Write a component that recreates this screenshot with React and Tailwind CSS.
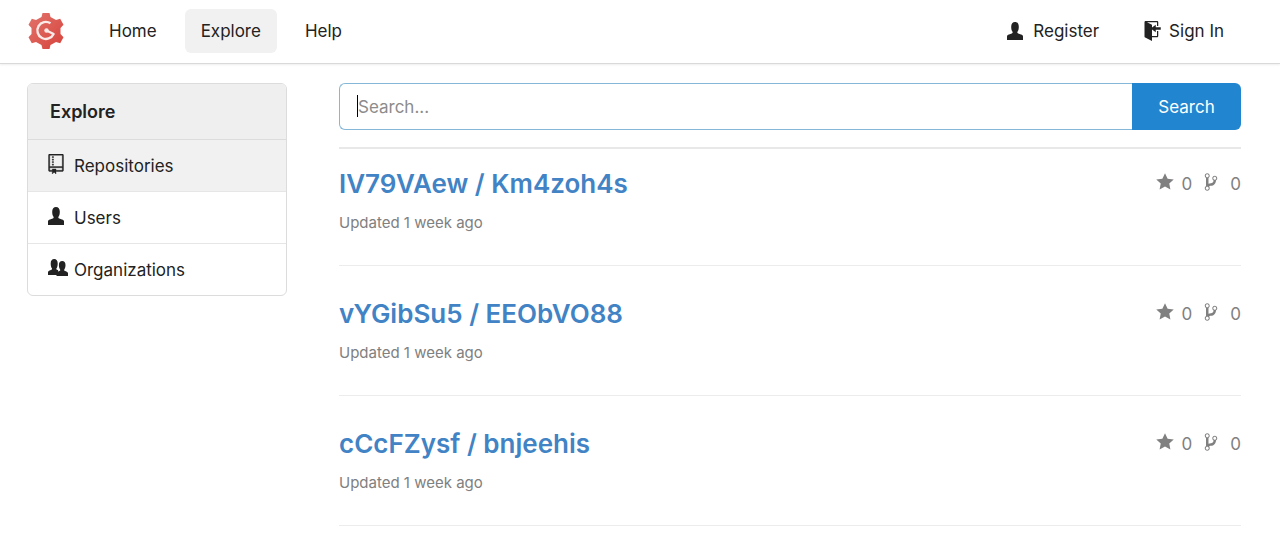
import React, { useState } from "react";

const repos = [
  { owner: "IV79VAew", name: "Km4zoh4s", stars: 0, forks: 0 },
  { owner: "vYGibSu5", name: "EEObVO88", stars: 0, forks: 0 },
  { owner: "cCcFZysf", name: "bnjeehis", stars: 0, forks: 0 },
];

const PersonIcon = ({ className }) => (
  <svg viewBox="0 0 16 18" className={className} fill="currentColor" aria-hidden="true">
    <path d="M0 18v-3.500c0-1.200.8-1.700 2-2.100l2.800-.9c.8-.3 1.100-.9.7-1.700C4.600 8.600 4.200 7 4.200 4.800 4.200 1.700 5.600 0 8 0s3.800 1.700 3.800 4.800c0 2.200-.4 3.800-1.300 5-.4.8-.1 1.400.7 1.700l2.800.9c1.200.4 2 .9 2 2.100V18z" />
  </svg>
);

const OrganizationIcon = ({ className }) => (
  <svg viewBox="0 0 20 18" className={className} fill="currentColor" aria-hidden="true">
    <path d="M0 16v-2.600c0-1.100.7-1.600 1.700-2l1.700-.6c.7-.3.8-.8.5-1.500C3.100 8.200 2.700 6.700 2.700 4.500 2.700 1.600 4 0 6.200 0s3.500 1.600 3.500 4.500c0 2.200-.4 3.700-1.200 4.800-.3.700-.2 1.200.5 1.500l1.200.4L9.500 16z" />
    <path d="M8.500 17v-2.500c0-1.200.7-1.700 1.700-2.100l1.500-.6c.6-.3.7-.8.4-1.400-.8-1.100-1.200-2.400-1.200-4.300C10.900 3.500 12.100 2 14.200 2s3.300 1.500 3.300 4.100c0 1.900-.4 3.200-1.200 4.300-.3.600-.2 1.100.4 1.400l1.500.6c1 .4 1.800.9 1.800 2.100V17z" />
  </svg>
);

const RepoIcon = ({ className }) => (
  <svg viewBox="0 0 12 16" className={className} fill="currentColor" stroke="currentColor" strokeWidth="0.300" aria-hidden="true">
    <path d="M4 9H3V8h1v1zm0-3H3v1h1V6zm0-2H3v1h1V4zm0-2H3v1h1V2zm8-1v12c0 .55-.45 1-1 1H6v2l-1.500-1.500L3 16v-2H1c-.55 0-1-.45-1-1V1c0-.55.45-1 1-1h10c.55 0 1 .45 1 1zm-1 10H1v2h2v-1h3v1h5v-2zm0-10H1v9h10V1z" />
  </svg>
);

const SignInIcon = ({ className }) => (
  <svg viewBox="0 0 14 16" className={className} fill="currentColor" aria-hidden="true">
    <path d="M7 6.750V12h4V8h1v4c0 .55-.45 1-1 1H7v3l-5.450-2.720c-.33-.17-.55-.52-.55-.91V1c0-.55.45-1 1-1h9c.55 0 1 .45 1 1v3h-1V1H3l4 2v2.250L10 3v2h4v2h-4v2L7 6.750z" />
  </svg>
);

const StarIcon = ({ className }) => (
  <svg viewBox="0 0 14 16" className={className} fill="currentColor" aria-hidden="true">
    <path d="M14 6l-4.900-.64L7 1 4.900 5.360 0 6l3.600 3.260L2.670 14 7 11.670 11.330 14l-.93-4.740L14 6z" />
  </svg>
);

const BranchIcon = ({ className }) => (
  <svg viewBox="0 0 10 16" className={className} fill="currentColor" aria-hidden="true">
    <path d="M10 5c0-1.110-.89-2-2-2a1.993 1.993 0 0 0-1 3.720v.3c-.02.52-.23.98-.63 1.380-.4.4-.86.61-1.380.63-.83.02-1.480.16-2 .45V4.720a1.993 1.993 0 0 0-1-3.720C.88 1 0 1.890 0 3a2 2 0 0 0 1 1.720v6.560c-.59.35-1 .99-1 1.720 0 1.110.89 2 2 2 1.110 0 2-.89 2-2 0-.53-.2-1-.53-1.360.09-.06.48-.41.59-.47.25-.11.56-.17.94-.17 1.050-.05 1.950-.45 2.750-1.250S8.950 7.770 9 6.730h-.02C9.590 6.370 10 5.730 10 5zM2 1.800c.66 0 1.200.55 1.200 1.200 0 .65-.55 1.200-1.200 1.200C1.350 4.200.8 3.650.8 3c0-.65.55-1.200 1.200-1.200zm0 12.410c-.66 0-1.200-.55-1.200-1.200 0-.65.55-1.200 1.200-1.200.65 0 1.200.55 1.200 1.200 0 .65-.55 1.200-1.200 1.200zm6-8c-.66 0-1.200-.55-1.200-1.200 0-.65.55-1.200 1.200-1.200.65 0 1.200.55 1.200 1.200 0 .65-.55 1.200-1.200 1.200z" />
  </svg>
);

const Logo = () => (
  <svg viewBox="0 0 36 36" className="size-9" aria-hidden="true">
    <defs>
      <linearGradient id="gear" x1="0" y1="0" x2="1" y2="1">
        <stop offset="0" stopColor="#e2746c" />
        <stop offset="1" stopColor="#d6433c" />
      </linearGradient>
    </defs>
    <path
      d="M14.500 0h7l1 4 5.500 3 4.200-1.300 3.300 6-3 3.300v6l3 3.300-3.300 6L28 29l-5.500 3-1 4h-7l-1-4L8 29l-4.200 1.300-3.300-6 3-3.300v-6l-3-3.300 3.300-6L8 7l5.500-3z"
      fill="url(#gear)"
    />
    <path d="M22.500 10.300A8.500 8.500 0 1 0 25.600 21L18.500 17.500" fill="none" stroke="#fbeae8" strokeWidth="2.400" strokeLinejoin="round" />
    <circle cx="18.500" cy="17.500" r="2.200" fill="#fbeae8" />
  </svg>
);

const App = () => {
  const [query, setQuery] = useState("");

  return (
    <div className="bg-white font-['Inter',sans-serif] text-[17px] leading-6 text-[#222]">
      <header className="flex h-16 items-center border-b border-[#d9d9d9] pb-px pl-7 pr-10 shadow-[0_1px_2px_#eeeeee]">
        <a href="#home" aria-label="Dashboard">
          <Logo />
        </a>
        <nav className="ml-[29px] flex flex-1 items-center gap-3">
          <a href="#home" className="rounded-md px-4 py-[10px]">Home</a>
          <a href="#explore" className="rounded-md bg-[#f1f1f1] px-4 py-[10px]">Explore</a>
          <a href="#help" className="rounded-md px-4 py-[10px]">Help</a>
          <a href="#register" className="ml-auto flex items-center gap-[10px] px-4 py-[10px]">
            <PersonIcon className="h-[18px] w-4" />
            Register
          </a>
          <a href="#signin" className="flex items-center gap-2 px-4 py-[10px]">
            <SignInIcon className="h-5 w-[18px]" />
            Sign In
          </a>
        </nav>
      </header>

      <div className="flex gap-[52px] pl-[27px] pr-[39px] pt-[19px]">
        <aside className="w-[260px] shrink-0 self-start overflow-hidden rounded-md border border-[#dcdcdc]">
          <h2 className="flex h-14 items-center border-b border-[#dcdcdc] bg-[#efefef] px-[22px] text-lg font-semibold">Explore</h2>
          <a href="#repositories" className="flex h-[52px] items-center gap-[10px] border-b border-[#e6e6e6] bg-[#f1f1f1] px-5">
            <RepoIcon className="mb-1 h-5 w-4" />
            Repositories
          </a>
          <a href="#users" className="flex h-[52px] items-center gap-[10px] border-b border-[#e6e6e6] px-5">
            <PersonIcon className="mb-1 h-[18px] w-4" />
            Users
          </a>
          <a href="#organizations" className="flex h-[51px] items-center gap-[6px] px-5">
            <OrganizationIcon className="mb-1 h-[18px] w-5" />
            Organizations
          </a>
        </aside>

        <main className="min-w-0 flex-1">
          <form className="flex" onSubmit={(e) => e.preventDefault()}>
            <div className="relative flex-1">
              <input
                type="text"
                aria-label="Search"
                value={query}
                onChange={(e) => setQuery(e.target.value)}
                placeholder="Search..."
                className="h-[47px] w-full rounded-l-md border border-r-0 border-[#85b7d9] px-[18px] outline-none placeholder:text-[#8c8c8c]"
              />
              {/* text cursor */}
              {!query && <span className="absolute left-[18px] top-3 h-[22px] w-px bg-black" />}
            </div>
            <button type="submit" className="h-[47px] w-[109px] rounded-r-md bg-[#2185d0] text-white">
              Search
            </button>
          </form>

          <div className="mt-[17px] border-t-2 border-[#e8e8e8]">
            {repos.map((repo) => (
              <article key={repo.owner} className="border-b border-[#ececec] py-8 first:pt-[19px]">
                <div className="flex items-center justify-between">
                  <h3 className="text-[26px] leading-8 font-semibold text-[#4183c4]">
                    <a href="#repo">
                      {repo.owner} / {repo.name}
                    </a>
                  </h3>
                  <div className="flex items-center text-[#808080]">
                    <StarIcon className="mr-2 mb-1 h-5 w-[18px]" />
                    {repo.stars}
                    <BranchIcon className="mr-3 mb-1 ml-3 h-5 w-[14px]" />
                    {repo.forks}
                  </div>
                </div>
                <p className="mt-[13px] text-[15px] leading-5 text-[#808080]">Updated 1 week ago</p>
              </article>
            ))}
          </div>
        </main>
      </div>
    </div>
  );
};

export default App;
